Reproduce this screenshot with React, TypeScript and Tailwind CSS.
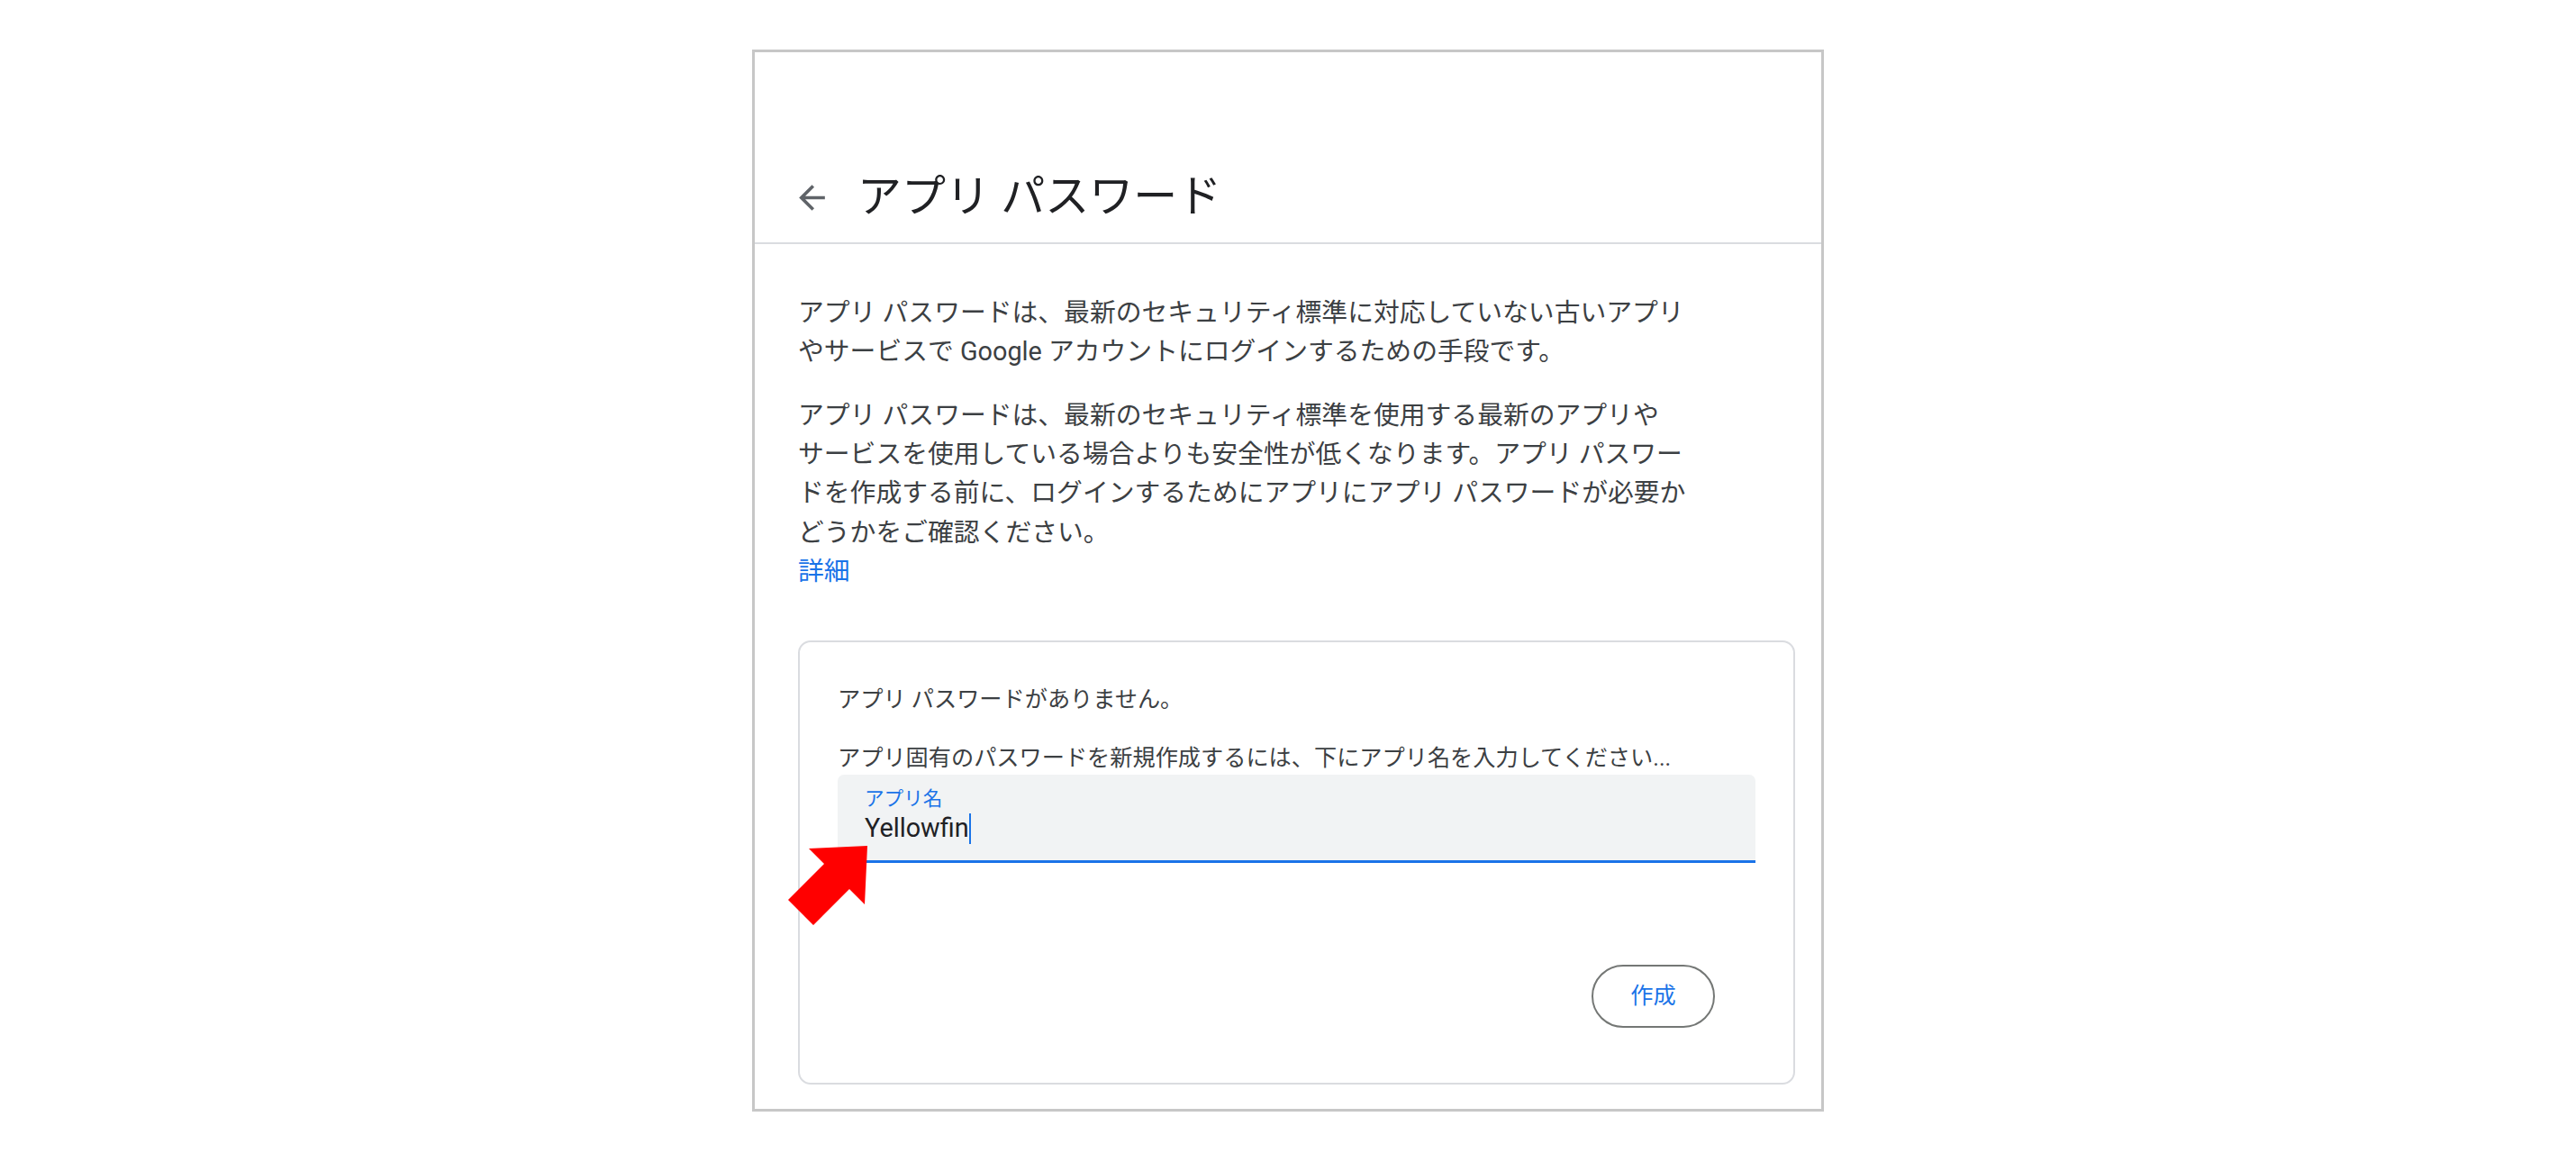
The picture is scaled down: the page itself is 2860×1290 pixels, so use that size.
const ArrowBack = () => (
  <svg viewBox="0 0 24 24" className="w-[43px] h-[43px] fill-[#5f6368]">
    <path d="M20 11H7.83l5.59-5.59L12 4l-8 8 8 8 1.41-1.41L7.83 13H20v-2z" />
  </svg>
);

const App = () => {
  return (
    <div className="w-full h-[1290px] bg-white pt-[55px] font-[family-name:Roboto,'Noto_Sans_CJK_JP',sans-serif]">
      <div className="mx-auto w-[1190px] h-[1179px] border-[3px] border-[#c7c7c7] bg-white">
        {/* HEADER */}
        <div className="h-[213px] border-b-2 border-[#dadce0] flex items-end pb-[18px] pl-[42px]">
          <div className="flex items-center h-[64px] gap-[29px]">
            <ArrowBack />
            <h1 className="text-[49px] leading-[64px] text-[#202124] font-normal whitespace-nowrap">
              アプリ パスワード
            </h1>
          </div>
        </div>

        {/* BODY */}
        <div className="pl-[48px] pr-[29px] pt-[55px]">
          <p className="text-[28.8px] leading-[43.2px] text-[#3c4043] whitespace-nowrap">
            アプリ パスワードは、最新のセキュリティ標準に対応していない古いアプリ
            <br />
            やサービスで Google アカウントにログインするための手段です。
          </p>
          <p className="mt-[27.6px] text-[28.8px] leading-[43.2px] text-[#3c4043] whitespace-nowrap">
            アプリ パスワードは、最新のセキュリティ標準を使用する最新のアプリや
            <br />
            サービスを使用している場合よりも安全性が低くなります。アプリ パスワー
            <br />
            ドを作成する前に、ログインするためにアプリにアプリ パスワードが必要か
            <br />
            どうかをご確認ください。
            <br />
            <a className="text-[#1a73e8]">詳細</a>
          </p>

          {/* CARD */}
          <div className="relative mt-[55px] border-2 border-[#dadce0] rounded-[14px] px-[42px] pt-[46px] pb-[61px]">
            <p className="text-[25.2px] leading-[36px] text-[#3c4043] whitespace-nowrap">
              アプリ パスワードがありません。
            </p>
            <p className="mt-[29px] text-[25.2px] leading-[36px] text-[#3c4043] whitespace-nowrap">
              アプリ固有のパスワードを新規作成するには、下にアプリ名を入力してください...
            </p>
            <div className="h-[98px] bg-[#f1f3f4] rounded-t-[7px] border-b-[3px] border-[#1a73e8] px-[30px] pt-[12px]">
              <div className="text-[21.6px] leading-[29px] text-[#1a73e8]">アプリ名</div>
              <div className="flex items-center h-[38px] text-[28.8px] text-[#202124]">
                <span>Yellowfin</span>
                <span className="w-[2px] h-[34px] bg-[#1a73e8]" />
              </div>
            </div>
            <div className="mt-[113px] flex justify-end pr-[45px]">
              <button className="w-[137px] h-[70px] rounded-full border-2 border-[#747775] text-[25.2px] text-[#1a73e8] bg-white">
                作成
              </button>
            </div>

            {/* RED POINTER */}
            <svg
              viewBox="865 930 100 100"
              className="absolute left-[-20px] top-[219px] w-[100px] h-[100px]"
            >
              <polygon
                points="960,937 957,1002 940,985 900,1025 872,997 912,957 895,940"
                fill="#ff0000"
              />
            </svg>
          </div>
        </div>
      </div>
    </div>
  );
};

export default App;
